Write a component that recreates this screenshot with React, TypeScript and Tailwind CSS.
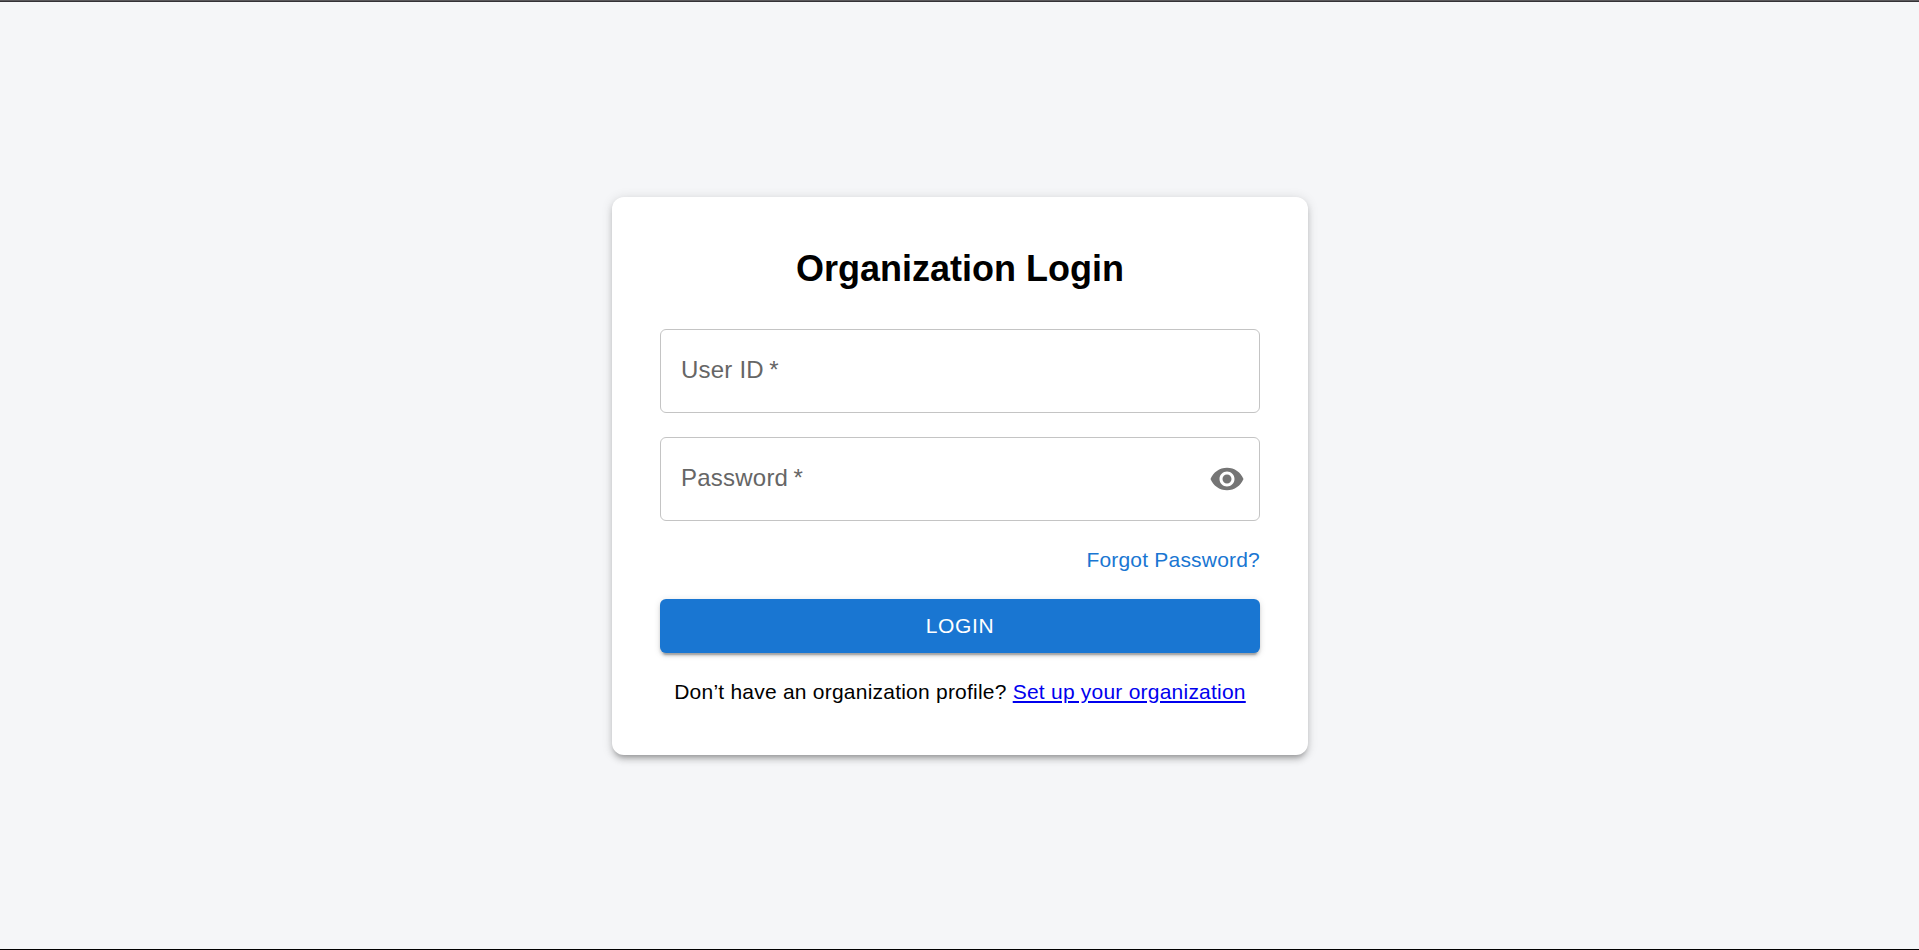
import React from "react";

function Field({ label, children }: { label: string; children?: React.ReactNode }) {
  return (
    <div className="mb-6 flex h-[84px] items-center justify-between rounded-md border border-[#c4c4c4] pr-[14px] pl-5">
      <label className="pb-0.5 text-2xl leading-[34px] tracking-[0.225px] text-[#666666]">
        {label}
        <span className="-ml-[1.5px] whitespace-pre"> *</span>
      </label>
      {children}
    </div>
  );
}

export default function App() {
  return (
    <div className="flex h-screen flex-col bg-[#f5f6f8] font-['Liberation_Sans',Arial,sans-serif] text-black">
      <div className="h-px shrink-0 bg-[#5b595c]" />
      <div className="h-px shrink-0 bg-[#343236]" />
      <main className="flex grow items-center justify-center pt-px pl-px">
        <section className="h-[558px] w-[696px] rounded-xl bg-white p-12 shadow-[0_4.5px_4.5px_-3px_rgba(0,0,0,0.2),0_4.5px_6px_0_rgba(0,0,0,0.14),0_1.5px_12px_0_rgba(0,0,0,0.12)]">
          <h1 className="mb-9 text-center text-4xl leading-[48px] font-bold">Organization Login</h1>
          <Field label="User ID" />
          <Field label="Password">
            <button type="button" aria-label="Show password" className="text-[#757575]">
              <svg viewBox="0 0 24 24" className="size-9" fill="currentColor">
                <path d="M12 4.5C7 4.5 2.73 7.61 1 12c1.73 4.39 6 7.5 11 7.5s9.27-3.11 11-7.5c-1.73-4.39-6-7.5-11-7.5M12 17c-2.76 0-5-2.24-5-5s2.24-5 5-5 5 2.24 5 5-2.24 5-5 5m0-8c-1.66 0-3 1.34-3 3s1.34 3 3 3 3-1.34 3-3-1.34-3-3-3" />
              </svg>
            </button>
          </Field>
          <div className="mb-6 text-right text-[21px] leading-[30px] tracking-[0.2px]">
            <a href="#" className="text-[#1976d2]">Forgot Password?</a>
          </div>
          <button
            type="button"
            className="mb-6 flex h-[54px] w-full items-center justify-center rounded-md bg-[#1976d2] text-[21px] leading-9 tracking-[0.6px] text-white shadow-[0_4.5px_1.5px_-3px_rgba(0,0,0,0.2),0_3px_3px_0_rgba(0,0,0,0.14),0_1.5px_7.5px_0_rgba(0,0,0,0.12)]"
          >
            LOGIN
          </button>
          <p className="text-center text-[21px] leading-[30px] tracking-[0.225px]">
            Don’t have an organization profile?{" "}
            <a href="#" className="text-[#0000ee] underline">Set up your organization</a>
          </p>
        </section>
      </main>
      <div className="h-px shrink-0 bg-black" />
    </div>
  );
}
